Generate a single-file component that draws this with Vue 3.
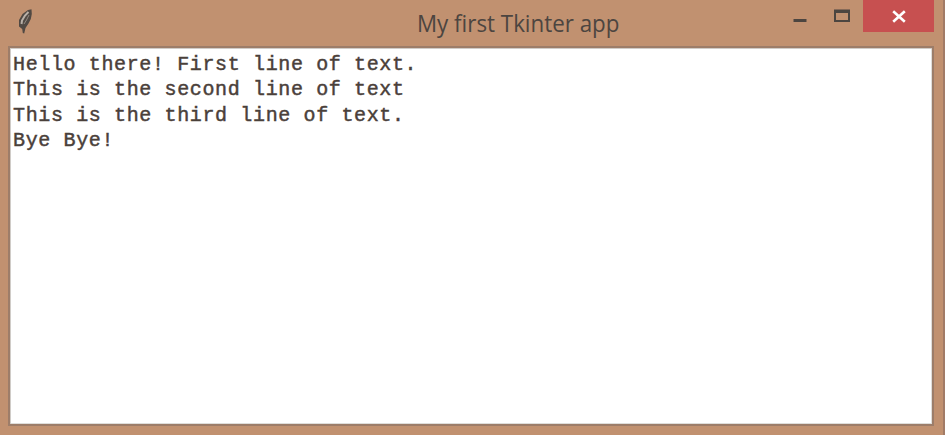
<script setup>
const lines = [
  'Hello there! First line of text.',
  'This is the second line of text',
  'This is the third line of text.',
  'Bye Bye!',
]
</script>

<template>
  <main class="window">
    <header class="titlebar">
      <svg class="feather" viewBox="0 0 18 28" aria-hidden="true">
        <path d="M11 2 L14.5 1.2 L14.8 6 L13.8 11 L11.5 15.5 L8.5 20 L7.2 25.5 L5.8 25 L5.2 21 L2 18.5 L2 12 L5.5 6 Z" fill="#514943" />
        <path d="M11.5 4 L8 7.5 L5 12.5 L4.5 16" fill="none" stroke="#b9b1a8" stroke-width="2" />
        <path d="M12 7 L9.5 12 L7 16" fill="none" stroke="#928a82" stroke-width="1" />
      </svg>
      <h1 class="title">My first Tkinter app</h1>
      <div class="controls">
        <button class="control minimize" aria-label="Minimize">
          <svg width="14" height="4" viewBox="0 0 14 4"><path d="M0.5 0h13v3h-13z" fill="#4c4540" /></svg>
        </button>
        <button class="control maximize" aria-label="Maximize">
          <svg width="16" height="14" viewBox="0 0 16 14"><path fill-rule="evenodd" d="M0 0.5h16v12.5H0z M2 4v7h12V4z" fill="#4c4540" /></svg>
        </button>
        <button class="control close" aria-label="Close">
          <svg width="14" height="13" viewBox="0 0 14 13"><path d="M1.2 1.2L12.8 11.8M12.8 1.2L1.2 11.8" stroke="#fff" stroke-width="2.6" /></svg>
        </button>
      </div>
    </header>
    <section class="editor">
      <div v-for="line in lines" :key="line" class="line">{{ line }}</div>
    </section>
  </main>
</template>

<style>
body {
  margin: 0;
}
</style>

<style scoped>
.window {
  box-sizing: border-box;
  width: 945px;
  height: 435px;
  padding: 0 9px 9px 8px;
  border-right: 2px solid #a27b66;
  background: #c19170;
  display: flex;
  flex-direction: column;
  overflow: hidden;
}
.titlebar {
  height: 46px;
  flex: none;
  display: grid;
  grid-template-columns: 409px 1fr 155px;
  align-items: start;
}
.feather {
  width: 18px;
  height: 28px;
  margin: 8px 0 0 9px;
}
.title {
  margin: 7px 0 0;
  font: 400 23.5px/32px "Open Sans", sans-serif;
  color: #4c4540;
  white-space: nowrap;
  transform: scaleX(0.951);
  transform-origin: left center;
}
.controls {
  display: flex;
}
.control {
  box-sizing: border-box;
  height: 32px;
  padding: 0;
  border: 0;
  background: transparent;
  display: flex;
  align-items: flex-start;
  justify-content: center;
}
.minimize {
  width: 42px;
  padding-top: 19px;
}
.maximize {
  width: 42px;
  padding-top: 9px;
}
.close {
  width: 71px;
  padding-top: 10px;
  background: #c75050;
}
.editor {
  box-sizing: border-box;
  flex: 1;
  padding: 4px 0 0 3px;
  border: 2px solid #9d7d69;
  box-shadow: inset 1px 1px #d0ccc8, inset -1px -1px #deddda;
  background: #fff;
}
.line {
  height: 25.3px;
  font: 400 20px/25.3px "Liberation Mono", monospace;
  letter-spacing: 0.63px;
  color: #4a403a;
  -webkit-text-stroke: 0.45px #4a403a;
  white-space: pre;
}
</style>
